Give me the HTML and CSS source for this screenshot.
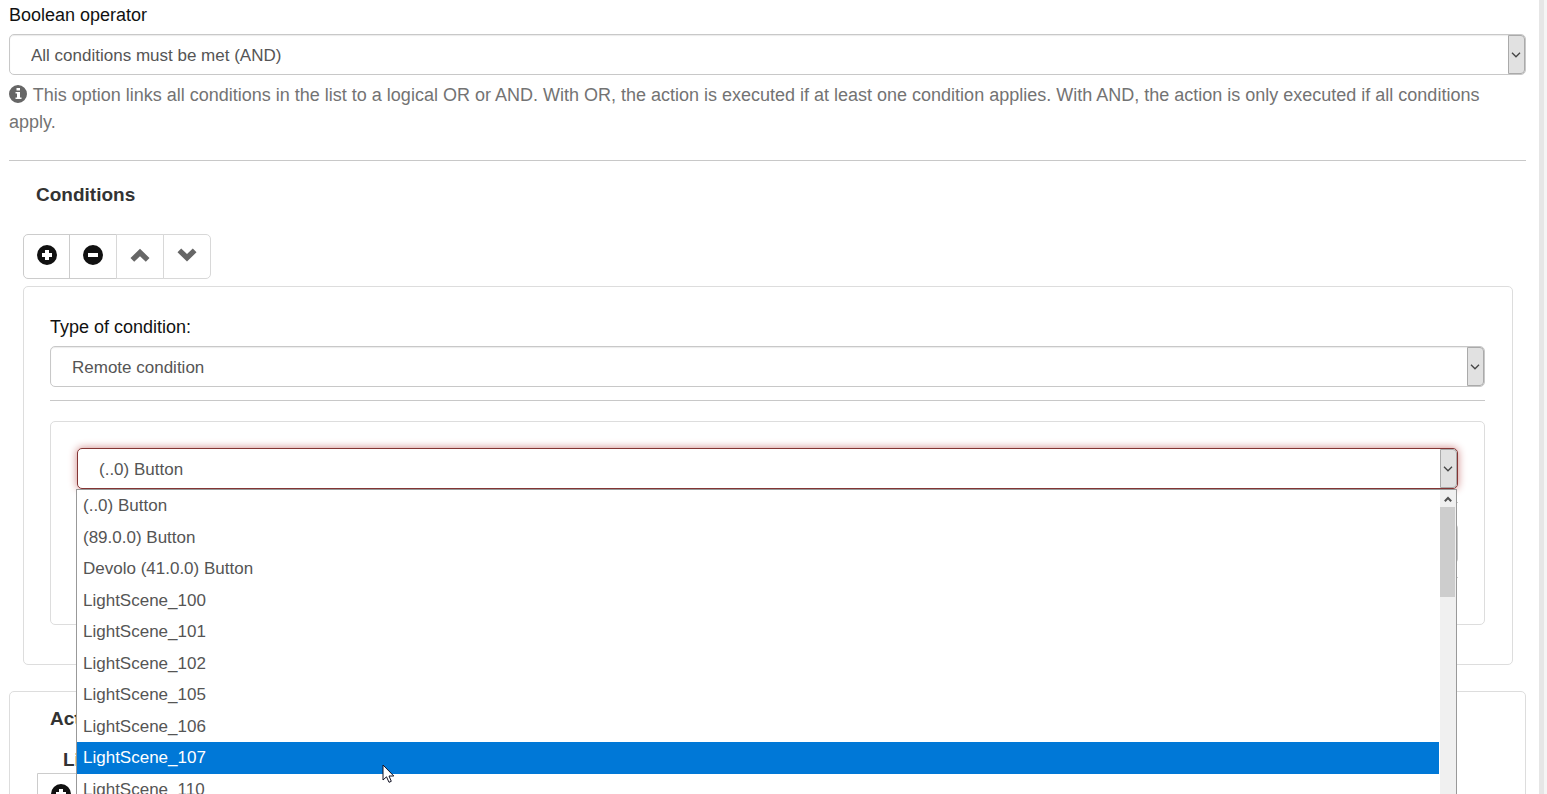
FILE: index.html
```html
<!DOCTYPE html>
<html lang="en">
<head>
<meta charset="utf-8">
<title>Conditions</title>
<link rel="stylesheet" href="styles.css">
</head>
<body>
<svg class="sprite" aria-hidden="true">
  <symbol id="plus" viewBox="0 0 20 20"><path fill-rule="evenodd" d="M10 0a10 10 0 1 0 0 20a10 10 0 0 0 0-20zM8 5h4v3h3v4h-3v3h-4v-3h-3v-4h3z"/></symbol>
  <symbol id="minus" viewBox="0 0 20 20"><path fill-rule="evenodd" d="M10 0a10 10 0 1 0 0 20a10 10 0 0 0 0-20zM5 8h10v4h-10z"/></symbol>
  <symbol id="up" viewBox="0 0 20 20"><path d="M10 3.800L19.500 13L15.800 16.800L10 11.200L4.200 16.800L.5 13z"/></symbol>
  <symbol id="down" viewBox="0 0 20 20"><path d="M10 16.500L.5 7.300L4.200 3.500L10 9.100L15.800 3.500L19.500 7.300z"/></symbol>
  <symbol id="info" viewBox="0 0 18 18"><path fill-rule="evenodd" d="M9 0a9 9 0 1 0 0 18a9 9 0 0 0 0-18zM7.500 3h3.500v2.500h-3.500zM6.500 7h4.500v5.500h1.500v1.500h-6v-1.500h1.500v-4h-1.500z"/></symbol>
  <symbol id="caret" viewBox="0 0 10 6"><path d="M1 .8L5 4.800L9 .8" fill="none" stroke="#444" stroke-width="1.300"/></symbol>
</svg>
<div class="page">
  <main class="content">
    <label class="label" for="operator">Boolean operator</label>
    <div class="field">
      <select class="select" id="operator"><option>All conditions must be met (AND)</option></select>
      <span class="arrow"><svg><use href="#caret"/></svg></span>
    </div>
    <p class="help"><svg class="info"><use href="#info"/></svg> This option links all conditions in the list to a logical OR or AND. With OR, the action is executed if at least one condition applies. With AND, the action is only executed if all conditions apply.</p>
    <hr class="rule">
    <section class="conditions">
      <h2 class="heading">Conditions</h2>
      <div class="toolbar">
        <button class="tool" type="button" aria-label="Add"><svg><use href="#plus"/></svg></button>
        <button class="tool" type="button" aria-label="Remove"><svg><use href="#minus"/></svg></button>
        <button class="tool muted" type="button" aria-label="Move up"><svg><use href="#up"/></svg></button>
        <button class="tool muted" type="button" aria-label="Move down"><svg><use href="#down"/></svg></button>
      </div>
      <div class="panel outer">
        <label class="label" for="type">Type of condition:</label>
        <div class="field">
          <select class="select" id="type"><option>Remote condition</option></select>
          <span class="arrow"><svg><use href="#caret"/></svg></span>
        </div>
        <hr class="rule short">
        <div class="panel inner">
          <div class="field">
            <select class="select active" id="device" aria-label="Device"><option>(..0) Button</option></select>
            <span class="arrow"><svg><use href="#caret"/></svg></span>
            <div class="dropdown">
              <ul class="options" role="listbox" aria-label="Device">
                <li role="option">(..0) Button</li>
                <li role="option">(89.0.0) Button</li>
                <li role="option">Devolo (41.0.0) Button</li>
                <li role="option">LightScene_100</li>
                <li role="option">LightScene_101</li>
                <li role="option">LightScene_102</li>
                <li role="option">LightScene_105</li>
                <li role="option">LightScene_106</li>
                <li role="option" class="chosen" aria-selected="true">LightScene_107</li>
                <li role="option">LightScene_110</li>
              </ul>
              <div class="scrollbar"><svg class="scroll-up" viewBox="0 0 8 6"><path d="M.8 5.200L4 2L7.200 5.200" fill="none" stroke="#505050" stroke-width="2"/></svg><div class="thumb"></div></div>
              <svg class="pointer" viewBox="0 0 13 20"><path d="M1 1V16L4.500 12.800L7 18.300L9.300 17.300L7 12H11.800z" fill="#fff" stroke="#112" stroke-width="1"/></svg>
            </div>
          </div>
          <hr class="rule short">
          <div class="field">
            <select class="select" aria-label="Value"></select>
          </div>
          <hr class="rule short">
        </div>
      </div>
    </section>
    <section class="panel actions">
      <h2 class="heading">Actions</h2>
      <h3 class="heading sub">Light</h3>
      <div class="toolbar">
        <button class="tool" type="button" aria-label="Add action"><svg><use href="#plus"/></svg></button>
      </div>
    </section>
  </main>
  <div class="edge"></div>
</div>
</body>
</html>
```
FILE: styles.css
```css
* { box-sizing: border-box; }

body {
  margin: 0;
  background: #fff;
  color: #111;
  font: 18px/27px "Liberation Sans", Arial, sans-serif;
}

.sprite { display: none; }

.page {
  display: flex;
  height: 100vh;
  overflow: hidden;
}

.content {
  flex: 1;
  padding: 2px 13px 0 9px;
}

.edge {
  width: 8px;
  background: #f5f5f5;
  border-left: 5px solid #e6e6e6;
}

.label {
  display: block;
  margin-bottom: 5px;
}

.field { position: relative; }

.select {
  appearance: none;
  display: block;
  width: 100%;
  height: 41px;
  padding: 2px 21px 0;
  border: 1px solid #c8c8c8;
  border-radius: 5px;
  background: #fff;
  box-shadow: inset 0 1px 1px rgba(0, 0, 0, 0.08);
  color: #555;
  font: 17px "Liberation Sans", Arial, sans-serif;
}

.select.active {
  border-color: #843534;
  outline: none;
  box-shadow: 0 0 8px #ce8483;
}

.arrow {
  position: absolute;
  inset: 1px 1px 1px auto;
  display: flex;
  align-items: center;
  justify-content: center;
  width: 17px;
  padding-right: 2px;
  border: 1px solid #aaa;
  border-radius: 0 4px 4px 0;
  background: #e1e1e1;
  pointer-events: none;
}

.arrow svg { width: 10px; height: 6px; }

.help {
  margin: 7px 0 0;
  color: #737373;
}

.info {
  width: 18px;
  height: 18px;
  margin-right: 1px;
  vertical-align: -2px;
  fill: #666;
}

.rule {
  height: 1px;
  margin: 24px 0 0;
  border: 0;
  background: #c8c8c8;
}

.rule.short { margin: 13px 0 20px; }

.conditions { padding: 20px 13px 0 14px; }

.heading {
  margin: 0 0 0 13px;
  color: #333;
  font-size: 19px;
  line-height: 27px;
}

.toolbar {
  display: flex;
  margin-top: 26px;
}

.tool {
  display: flex;
  align-items: center;
  justify-content: center;
  width: 48px;
  height: 45px;
  margin-right: -1px;
  padding: 0 0 3px;
  border: 1px solid #ccc;
  background: #fff;
  fill: #111;
}

.tool:first-child { width: 47px; border-radius: 5px 0 0 5px; }
.tool:last-child { border-radius: 0 5px 5px 0; }
.tool svg { width: 20px; height: 20px; }
.tool.muted { border-color: #d8d8d8; fill: #666; }

.panel {
  border: 1px solid #ddd;
  border-radius: 5px;
}

.outer {
  margin-top: 7px;
  padding: 27px 27px 39px 26px;
}

.inner { padding: 26px; }

.dropdown {
  position: absolute;
  z-index: 1;
  top: 41px;
  left: -1px;
  right: 1px;
  display: flex;
  border: 1px solid #999;
  background: #fff;
}

.options {
  display: grid;
  grid-auto-rows: 1fr;
  flex: 1;
  height: 315px;
  margin: 0;
  padding: 0;
  color: #555;
  font-size: 17px;
  line-height: 31px;
  list-style: none;
}

.options li { padding-left: 6px; }
.chosen { background: #0078d7; color: #fff; }

.scrollbar {
  width: 16px;
  padding: 6px 1px 0 0;
  margin-left: 1px;
  background: #f0f0f0;
}

.scroll-up {
  display: block;
  width: 8px;
  height: 6px;
  margin: 0 auto 5px;
}

.thumb {
  height: 90px;
  background: #cdcdcd;
}

.pointer {
  position: absolute;
  top: 274px;
  left: 305px;
  width: 13px;
  height: 20px;
}

.actions {
  margin-top: 26px;
  padding: 13px 27px;
}

.actions .heading { margin-left: 13px; }
.actions .heading.sub { margin: 14px 0 0 26px; }
.actions .toolbar { margin-top: 0; }
```
